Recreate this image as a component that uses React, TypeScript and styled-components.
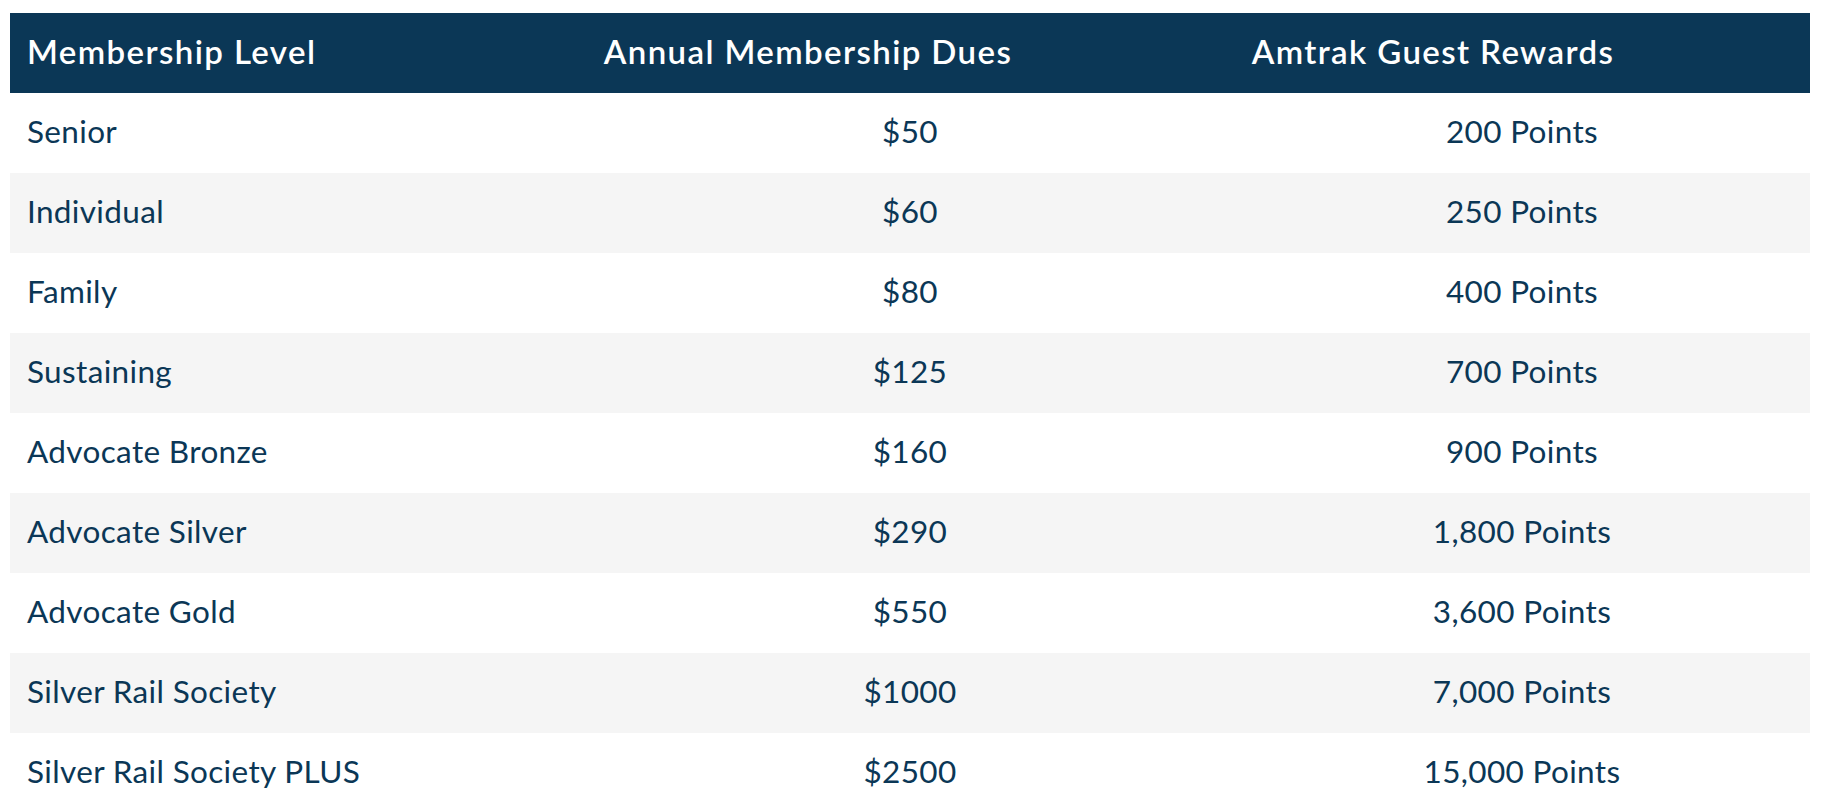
import React from "react";
import styled, { createGlobalStyle } from "styled-components";

const Global = createGlobalStyle`
  html, body { margin: 0; padding: 0; background: #ffffff; }
  body { font-family: Lato, "Noto Sans", "Liberation Sans", sans-serif; }
`;

const Page = styled.div`
  padding: 13px 0 0 10px;
`;

const Table = styled.div`
  width: 1800px;
  display: flex;
  flex-direction: column;
`;

const HeaderRow = styled.div`
  display: grid;
  grid-template-columns: 550px 496px 754px;
  height: 80px;
  align-items: center;
  background: #0b3756;
`;

const HeaderCell = styled.div<{ $align: "left" | "center" }>`
  color: #ffffff;
  font-size: 33px;
  font-weight: 600;
  letter-spacing: 1.4px;
  text-align: ${(p) => p.$align};
  padding: 0 17px 4px;
  white-space: nowrap;
`;

const BodyRow = styled.div<{ $striped: boolean }>`
  display: grid;
  grid-template-columns: 576px 648px 576px;
  height: 80px;
  align-items: center;
  background: ${(p) => (p.$striped ? "#f5f5f5" : "#ffffff")};
`;

const Cell = styled.div<{ $align: "left" | "center" }>`
  color: #0b3756;
  font-size: 31.5px;
  font-weight: 400;
  letter-spacing: 0.35px;
  text-align: ${(p) => p.$align};
  padding: 0 17px 4px;
  white-space: nowrap;
`;

const rows: [string, string, string][] = [
  ["Senior", "$50", "200 Points"],
  ["Individual", "$60", "250 Points"],
  ["Family", "$80", "400 Points"],
  ["Sustaining", "$125", "700 Points"],
  ["Advocate Bronze", "$160", "900 Points"],
  ["Advocate Silver", "$290", "1,800 Points"],
  ["Advocate Gold", "$550", "3,600 Points"],
  ["Silver Rail Society", "$1000", "7,000 Points"],
  ["Silver Rail Society PLUS", "$2500", "15,000 Points"],
];

export default function App() {
  return (
    <Page>
      <Global />
      <Table>
        <HeaderRow>
          <HeaderCell $align="left">Membership Level</HeaderCell>
          <HeaderCell $align="center">Annual Membership Dues</HeaderCell>
          <HeaderCell $align="center">Amtrak Guest Rewards</HeaderCell>
        </HeaderRow>
        {rows.map((r, i) => (
          <BodyRow key={r[0]} $striped={i % 2 === 1}>
            <Cell $align="left">{r[0]}</Cell>
            <Cell $align="center">{r[1]}</Cell>
            <Cell $align="center">{r[2]}</Cell>
          </BodyRow>
        ))}
      </Table>
    </Page>
  );
}
